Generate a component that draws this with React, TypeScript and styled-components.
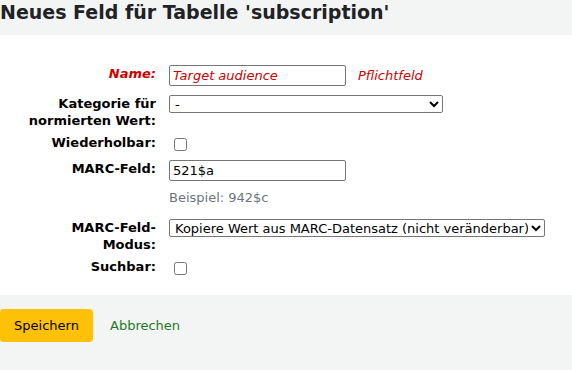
import styled, { createGlobalStyle } from "styled-components";

const GlobalStyle = createGlobalStyle`
  html, body {
    margin: 0;
    padding: 0;
    background: #ffffff;
    font-family: "DejaVu Sans", "Noto Sans", sans-serif;
    font-size: 13px;
    color: #000;
  }
`;

const Header = styled.div`
  background: #f3f4f4;
  height: 35px;
  overflow: hidden;
`;

const Title = styled.h1`
  margin: 0;
  padding: 0;
  font-size: 19px;
  font-weight: bold;
  line-height: 24px;
  color: #1f2226;
`;

const Form = styled.div`
  padding: 30px 0 0 0;
  height: 260px;
  box-sizing: border-box;
`;

const Row = styled.div<{ $gap?: number }>`
  display: grid;
  grid-template-columns: 156px 1fr;
  column-gap: 13px;
  align-items: start;
  margin-bottom: ${(p) => p.$gap ?? 8}px;
`;

const Label = styled.label<{ $required?: boolean }>`
  text-align: right;
  font-weight: bold;
  line-height: 17px;
  color: ${(p) => (p.$required ? "#cc0000" : "#000")};
  font-style: ${(p) => (p.$required ? "italic" : "normal")};
`;

const Field = styled.div`
  display: flex;
  align-items: center;
  gap: 12px;
`;

const Column = styled.div`
  display: flex;
  flex-direction: column;
`;

const TextInput = styled.input<{ $required?: boolean }>`
  width: 177px;
  height: 21px;
  box-sizing: border-box;
  border: 1px solid #767676;
  border-radius: 2px;
  padding: 0 3px;
  font-family: "DejaVu Sans", sans-serif;
  font-size: 13px;
  color: ${(p) => (p.$required ? "#cc0000" : "#000")};
  font-style: ${(p) => (p.$required ? "italic" : "normal")};
  background: #fff;
  margin: 0;
`;

const Select = styled.select<{ $width: number }>`
  width: ${(p) => p.$width}px;
  height: 18px;
  box-sizing: border-box;
  border: 1px solid #767676;
  border-radius: 2px;
  font-family: "DejaVu Sans", sans-serif;
  font-size: 13px;
  color: #000;
  background: #fff;
  margin: 0;
  padding: 0 0 0 1px;
`;

const Check = styled.input`
  width: 13px;
  height: 13px;
  margin: 4px 0 0 5px;
`;

const Required = styled.span`
  color: #cc0000;
  font-style: italic;
`;

const Hint = styled.div`
  color: #6c757d;
  margin-top: 8px;
  line-height: 17px;
`;

const Footer = styled.div`
  background: #f3f4f4;
  height: 75px;
  padding-top: 14px;
  box-sizing: border-box;
`;

const Actions = styled.div`
  display: flex;
  align-items: center;
  gap: 17px;
  height: 33px;
`;

const SaveButton = styled.button`
  background: #ffc107;
  border: none;
  border-radius: 4px;
  height: 33px;
  width: 93px;
  font-family: "DejaVu Sans", sans-serif;
  font-size: 13px;
  color: #000;
  padding: 0;
`;

const CancelLink = styled.a`
  color: #1e7a1e;
  text-decoration: none;
`;

export default function App() {
  return (
    <>
      <GlobalStyle />
      <Header>
        <Title>Neues Feld für Tabelle 'subscription'</Title>
      </Header>
      <Form>
        <Row $gap={9}>
          <Label $required>Name:</Label>
          <Field>
            <TextInput $required defaultValue="Target audience" />
            <Required>Pflichtfeld</Required>
          </Field>
        </Row>
        <Row $gap={5}>
          <Label>
            Kategorie für
            <br />
            normierten Wert:
          </Label>
          <Field>
            <Select $width={274}>
              <option>-</option>
            </Select>
          </Field>
        </Row>
        <Row $gap={9}>
          <Label>Wiederholbar:</Label>
          <Field>
            <Check type="checkbox" />
          </Field>
        </Row>
        <Row $gap={13}>
          <Label>MARC-Feld:</Label>
          <Column>
            <TextInput defaultValue="521$a" />
            <Hint>Beispiel: 942$c</Hint>
          </Column>
        </Row>
        <Row $gap={5}>
          <Label>
            MARC-Feld-
            <br />
            Modus:
          </Label>
          <Field>
            <Select $width={376}>
              <option>Kopiere Wert aus MARC-Datensatz (nicht veränderbar)</option>
            </Select>
          </Field>
        </Row>
        <Row $gap={0}>
          <Label>Suchbar:</Label>
          <Field>
            <Check type="checkbox" />
          </Field>
        </Row>
      </Form>
      <Footer>
        <Actions>
          <SaveButton>Speichern</SaveButton>
          <CancelLink href="#">Abbrechen</CancelLink>
        </Actions>
      </Footer>
    </>
  );
}
